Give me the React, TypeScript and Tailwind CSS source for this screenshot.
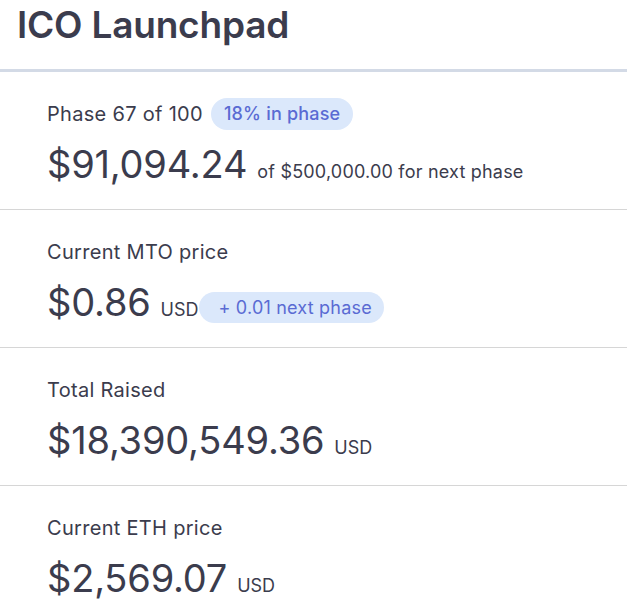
import React from 'react';

type Stat = {
  label: string;
  value: string;
  unit?: string;
  badge?: string;
  suffix?: string;
  badgeAfter?: string;
};

const stats: Stat[] = [
  { label: 'Phase 67 of 100', badge: '18% in phase', value: '$91,094.24', suffix: 'of $500,000.00 for next phase' },
  { label: 'Current MTO price', value: '$0.86', unit: 'USD', badgeAfter: '+ 0.01 next phase' },
  { label: 'Total Raised', value: '$18,390,549.36', unit: 'USD' },
  { label: 'Current ETH price', value: '$2,569.07', unit: 'USD' },
];

const StatRow: React.FC<{ stat: Stat; last: boolean }> = ({ stat, last }) => (
  <div className={`pl-[47px] pt-[26px] h-[138px] ${last ? '' : 'border-b border-[#d6d6d6]'}`}>
    <div className="flex items-center h-[32px]">
      <span className="text-[20px] leading-[32px] tracking-[0.3px]">{stat.label}</span>
      {stat.badge && (
        <span className="ml-[8px] h-[32px] px-[13px] rounded-full bg-[#dbe8fb] text-[#5a6bd3] text-[18px] leading-[32px] font-medium tracking-[0.2px]">
          {stat.badge}
        </span>
      )}
    </div>
    <div className="flex items-baseline mt-[10px]">
      <span className="text-[38px] leading-[48px] tracking-[-0.2px]">{stat.value}</span>
      {stat.suffix && <span className="ml-[10px] text-[18px] tracking-[0.2px]">{stat.suffix}</span>}
      {stat.unit && <span className="ml-[10px] text-[18px]">{stat.unit}</span>}
      {stat.badgeAfter && (
        <span className="relative top-[-2px] h-[31px] pl-[20px] pr-[12px] rounded-full bg-[#dbe8fb] text-[#5a6bd3] text-[18px] leading-[31px] tracking-[0.2px]">
          {stat.badgeAfter}
        </span>
      )}
    </div>
  </div>
);

export default function App() {
  return (
    <div className="w-[627px] h-[609px] overflow-hidden bg-white text-[#3b3c4d] font-['Inter','Liberation_Sans',sans-serif]">
      <div className="h-[72px] border-b-[3px] border-[#d3dae6] pl-[17px]">
        <h1 className="text-[37px] leading-[50px] font-semibold tracking-[-0.2px]">ICO Launchpad</h1>
      </div>
      {stats.map((s, i) => (
        <StatRow key={s.label} stat={s} last={i === stats.length - 1} />
      ))}
    </div>
  );
}
